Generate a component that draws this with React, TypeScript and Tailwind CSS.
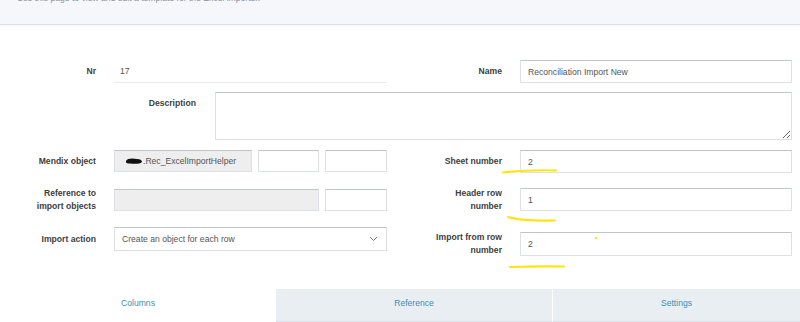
import React from "react";

const label = "text-right font-bold text-[#404040] leading-[12.7px]";
const box =
    "h-full border border-[#dde1e5] border-t-[#bcc6cf] text-[#555] outline-none px-[7px] text-[8.6px]";

function Field({ width, value = "", gray = false }: { width: string; value?: string; gray?: boolean }) {
    return (
        <input
            readOnly
            value={value}
            className={`${box} ${width} ${gray ? "bg-[#eeeeee]" : "bg-white"}`}
        />
    );
}

function Marks() {
    // hand-drawn yellow annotations over the screenshot
    return (
        <svg className="absolute inset-0 pointer-events-none" width="800" height="322">
            <path d="M503 172.5 Q530 169.5 556 170.5" stroke="#ffe414" strokeWidth="2.2" fill="none" strokeLinecap="round" />
            <path d="M508 217 Q522 221 555 220.5" stroke="#ffe414" strokeWidth="2.2" fill="none" strokeLinecap="round" />
            <path d="M510 267 Q540 266 564 266.5" stroke="#ffe414" strokeWidth="2.2" fill="none" strokeLinecap="round" />
            <circle cx="596" cy="238" r="1.2" fill="#ffe414" />
        </svg>
    );
}

export default function App() {
    return (
        <div className="relative w-[800px] h-[322px] overflow-hidden bg-white font-['Liberation_Sans',Arial,sans-serif] text-[8.6px]">
            <div className="h-[25px] bg-[#f5f7fb] border-b border-[#dcdfe3] shadow-[0_1px_1px_rgba(0,0,0,0.03)] overflow-hidden pl-[17px]">
                <div className="-mt-[8px] leading-[12px] text-[#8a8f96] whitespace-nowrap">
                    Use this page to view and edit a template for the Excel importer.
                </div>
            </div>

            {/* Nr / Name */}
            <div className="mt-[35px] grid grid-cols-[400px_400px]">
                <div className="flex items-center h-[23px]">
                    <div className={`${label} w-[96px]`}>Nr</div>
                    <div className="ml-[18px] w-[273px] h-[23px] flex items-center pl-[6px] border-b border-[#ececec] text-[#555]">17</div>
                </div>
                <div className="flex items-center h-[23px]">
                    <div className={`${label} w-[102px]`}>Name</div>
                    <Field width="w-[272px] ml-[18px]" value="Reconciliation Import New" />
                </div>
            </div>

            {/* Description */}
            <div className="mt-[9px] flex items-start">
                <div className={`${label} w-[196px] pt-[5px]`}>Description</div>
                <textarea
                    defaultValue=""
                    className="ml-[19px] w-[577px] h-[48px] border border-[#dde1e5] border-t-[#bcc6cf] outline-none"
                />
            </div>

            <div className="mt-[10px] grid grid-cols-[400px_400px] items-start">
                <div className="flex flex-col">
                    <div className="flex items-center h-[22px]">
                        <div className={`${label} w-[96px]`}>Mendix object</div>
                        <div className="ml-[18px] w-[138px] h-full flex items-center pl-[10px] bg-[#eeeeee] border border-[#dde1e5] border-t-[#bcc6cf] text-[#555]">
                            <svg width="18" height="8" viewBox="0 0 18 8" className="shrink-0">
                                <path d="M1 4 C2 1 8 1 12 2 C15 2 17 3 17 5 C16 7 9 7 5 6.5 C2 6.5 0.5 6 1 4 Z" fill="#111" />
                            </svg>
                            <span>.Rec_ExcelImportHelper</span>
                        </div>
                        <Field width="w-[61px] ml-[6px]" />
                        <Field width="w-[62px] ml-[6px]" />
                    </div>
                    <div className="mt-[17px] flex items-center h-[22px]">
                        <div className={`${label} w-[96px]`}>
                            Reference to
                            <br />
                            import objects
                        </div>
                        <Field width="w-[205px] ml-[18px]" gray />
                        <Field width="w-[62px] ml-[6px]" />
                    </div>
                    <div className="mt-[16px] flex items-center h-[24px]">
                        <div className={`${label} w-[96px]`}>Import action</div>
                        <div className="ml-[18px] w-[273px] h-full flex items-center justify-between pl-[7px] pr-[8px] border border-[#dde1e5] border-t-[#bcc6cf] text-[#555]">
                            <span>Create an object for each row</span>
                            <svg width="9" height="6" viewBox="0 0 9 6">
                                <path d="M1 1 L4.5 4.5 L8 1" stroke="#777" strokeWidth="1" fill="none" />
                            </svg>
                        </div>
                    </div>
                </div>

                <div className="flex flex-col">
                    <div className="flex items-center h-[23px]">
                        <div className={`${label} w-[102px]`}>Sheet number</div>
                        <Field width="w-[272px] ml-[18px]" value="2" />
                    </div>
                    <div className="mt-[15px] flex items-center h-[23px]">
                        <div className={`${label} w-[102px]`}>
                            Header row
                            <br />
                            number
                        </div>
                        <Field width="w-[272px] ml-[18px]" value="1" />
                    </div>
                    <div className="mt-[21px] flex items-center h-[24px]">
                        <div className={`${label} w-[102px]`}>
                            Import from row
                            <br />
                            number
                        </div>
                        <Field width="w-[272px] ml-[18px]" value="2" />
                    </div>
                </div>
            </div>

            {/* Tabs */}
            <div className="mt-[33px] flex h-[33px] text-[#3d8db5]">
                <div className="w-[276px] bg-white text-center pt-[8px] leading-[12px]">Columns</div>
                <div className="w-[276px] bg-[#e9eef2] border-b border-[#dbe1e6] text-center pt-[8px] leading-[12px]">Reference</div>
                <div className="flex-1 bg-[#e9eef2] border-l border-white border-b border-b-[#dbe1e6] text-center pt-[8px] leading-[12px]">Settings</div>
            </div>

            <Marks />
        </div>
    );
}
